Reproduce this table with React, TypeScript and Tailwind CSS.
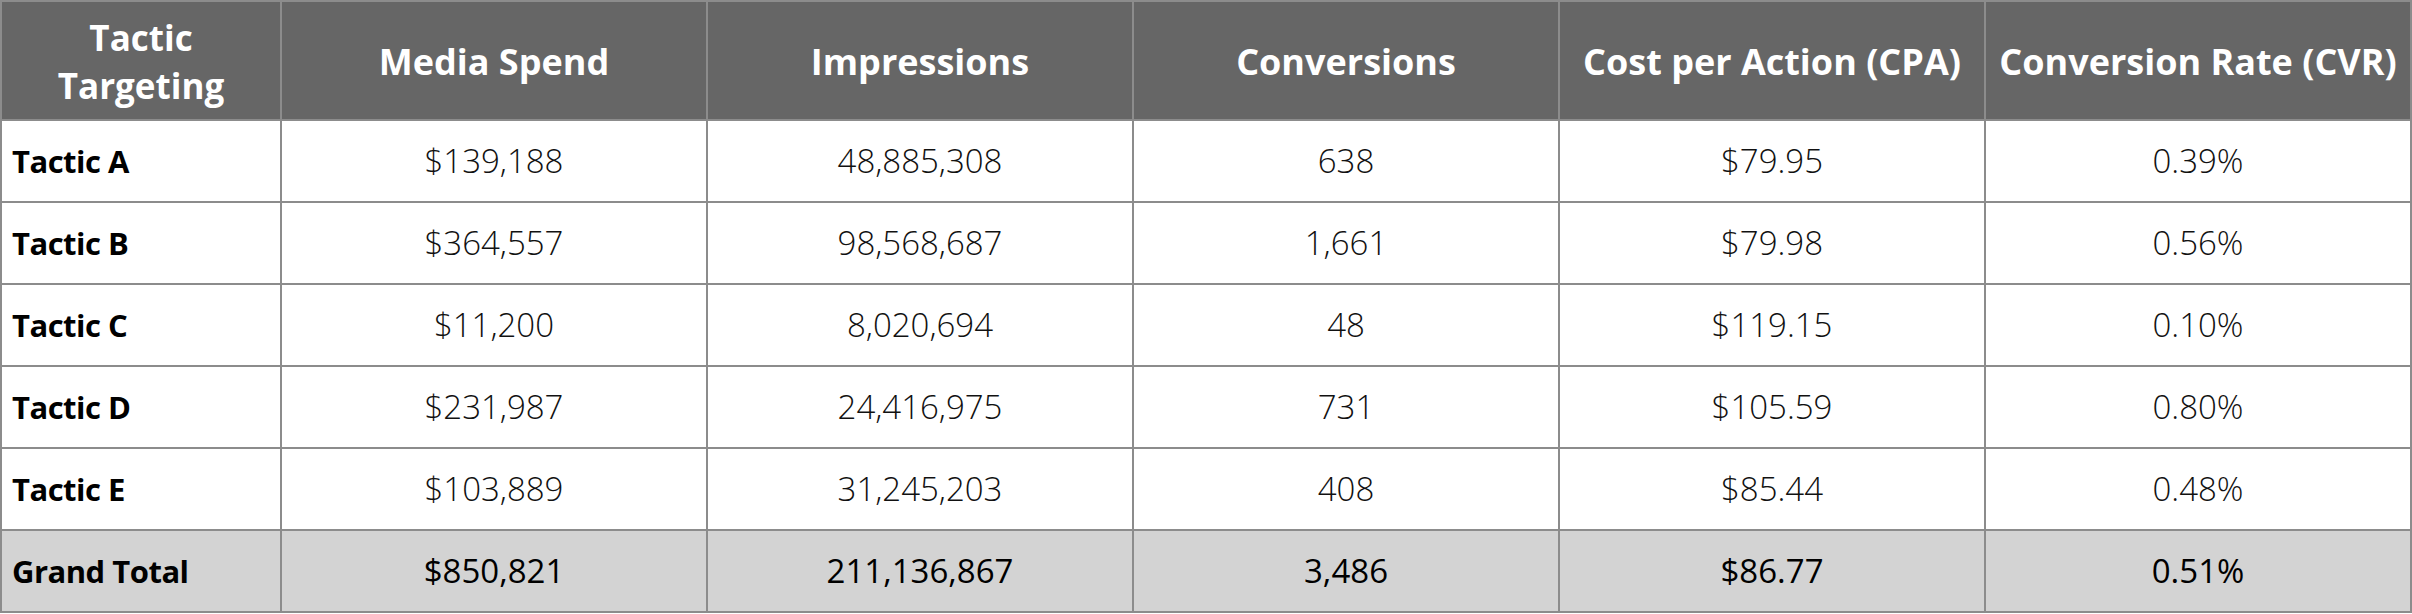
const headers = [
  "Media Spend",
  "Impressions",
  "Conversions",
  "Cost per Action (CPA)",
  "Conversion Rate (CVR)",
];

const rows = [
  ["Tactic A", "$139,188", "48,885,308", "638", "$79.95", "0.39%"],
  ["Tactic B", "$364,557", "98,568,687", "1,661", "$79.98", "0.56%"],
  ["Tactic C", "$11,200", "8,020,694", "48", "$119.15", "0.10%"],
  ["Tactic D", "$231,987", "24,416,975", "731", "$105.59", "0.80%"],
  ["Tactic E", "$103,889", "31,245,203", "408", "$85.44", "0.48%"],
];

const total = ["Grand Total", "$850,821", "211,136,867", "3,486", "$86.77", "0.51%"];

export default function App() {
  return (
    <div className="w-[2412px] h-[614px] bg-white font-['Open_Sans','Noto_Sans',sans-serif]">
      <table className="w-[2412px] table-fixed border-collapse border-2 border-[#8c8c8c]">
        <colgroup>
          <col className="w-[280px]" />
          <col />
          <col />
          <col />
          <col />
          <col />
        </colgroup>
        <thead>
          <tr className="bg-[#666666] text-white">
            <th className="h-[119px] border-2 border-[#8c8c8c] pt-[2px] text-[35px] font-bold leading-[48px]">
              Tactic
              <br />
              Targeting
            </th>
            {headers.map((h) => (
              <th
                key={h}
                className="h-[119px] border-2 border-[#8c8c8c] pt-[2px] text-[36px] font-bold whitespace-nowrap"
              >
                {h}
              </th>
            ))}
          </tr>
        </thead>
        <tbody>
          {rows.map((r) => (
            <tr key={r[0]} className="bg-white text-black">
              <td className="h-[82px] border-2 border-[#8c8c8c] pl-[10px] text-[31px] font-bold tracking-[-0.5px]">
                {r[0]}
              </td>
              {r.slice(1).map((v, i) => (
                <td
                  key={i}
                  className="h-[82px] border-2 border-[#8c8c8c] text-center text-[33px] font-light text-[#111]"
                >
                  {v}
                </td>
              ))}
            </tr>
          ))}
          <tr className="bg-[#d3d3d3] text-black">
            <td className="h-[82px] border-2 border-[#8c8c8c] pl-[10px] text-[31px] font-bold tracking-[-0.5px]">
              {total[0]}
            </td>
            {total.slice(1).map((v, i) => (
              <td
                key={i}
                className="h-[82px] border-2 border-[#8c8c8c] text-center text-[33px] font-medium"
              >
                {v}
              </td>
            ))}
          </tr>
        </tbody>
      </table>
    </div>
  );
}
